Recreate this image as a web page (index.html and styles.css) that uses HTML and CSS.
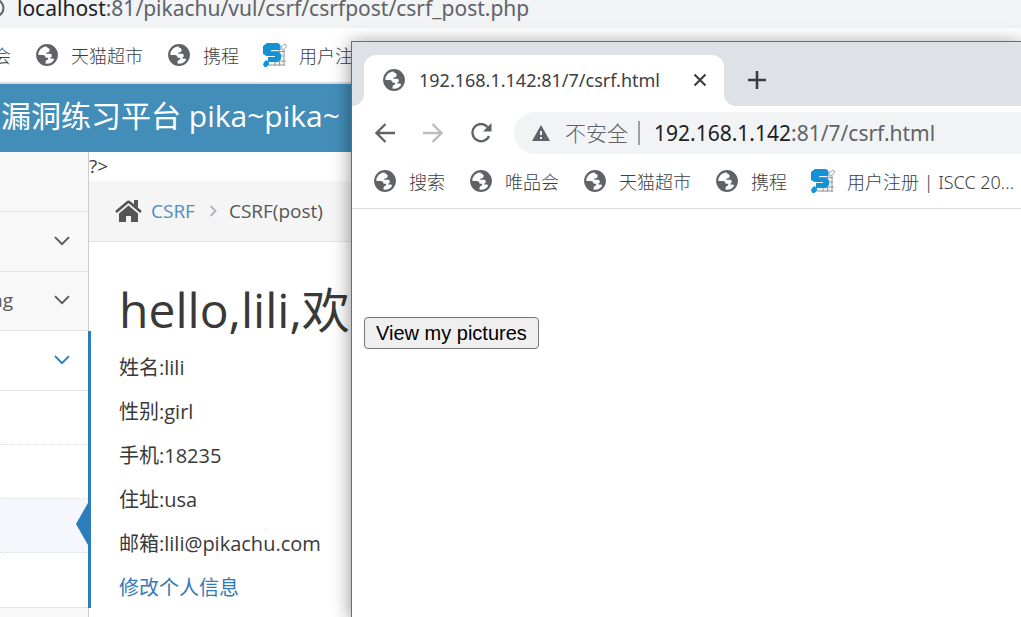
FILE: index.html
```html
<!DOCTYPE html>
<html lang="zh-CN">
<head>
<meta charset="utf-8">
<title>CSRF(post)</title>
<link rel="stylesheet" href="styles.css">
</head>
<body>
<svg class="defs" aria-hidden="true">
  <symbol id="globe" viewBox="0 0 22 22">
    <circle cx="11" cy="11" r="9.800" fill="#fff" stroke="#5f6368" stroke-width="2.200"/>
    <path d="M11 1C16.500 1 21 5.500 21 11c0 2-.6 3.900-1.700 5.300l-2-1.500c-.8-.5-1.800-.4-2.600.1l-.4-1.400c1-.3 1.600-1.100 1.500-2.100-.1-1-.9-1.600-1.900-1.600h-3.700V8.400c1.700.2 3-.4 3.300-1.700.3-1 .2-1.500-.5-2.200L10.500 3z" fill="#5f6368"/>
    <path d="M1 11l5.800.1c1.700 0 2.700 1.100 2.800 2.700h2.700c0 1.900-1.100 2.600-2.500 2.800l-.5 3.900C4.500 20 1 16 1 11z" fill="#5f6368"/>
  </symbol>
  <symbol id="iscc" viewBox="0 0 24 24">
    <path d="M6 5h16v18H6z" fill="#f1f1f0"/>
    <path d="M12 17v6M16.500 5v18M21 7v16M6 22h16M15 18h8M8 8.500h14M17 13h5" stroke="#9a9da0" stroke-width="1" fill="none"/>
    <path d="M18 4l4-3 1.500 1-1 3-3 2z" fill="#fff" stroke="#8a8d90" stroke-width=".8"/>
    <path d="M4 0h11l2.500 2v5H8v1.500h7l3 2.500v5l-3 3H5v-5h7v-1H3.500L0 11V3z" fill="#1492d4"/>
    <path d="M1 19l2.500-2L6 19.500v2L3.500 24H1.500L0 21.500z" fill="#1492d4"/>
  </symbol>
  <symbol id="chevron" viewBox="0 0 16 10">
    <path d="M1 1.200L8 8.200l7-7" fill="none" stroke="currentColor" stroke-width="1.900"/>
  </symbol>
</svg>

<div class="browser">
  <div class="address"><svg class="info" viewBox="0 0 20 20"><circle cx="10" cy="10" r="8.500" fill="none" stroke="#5f6368" stroke-width="2"/></svg><span><b>localhost</b>:81/pikachu/vul/csrf/csrfpost/csrf_post.php</span></div>
  <nav class="bookmarks main-bookmarks">
    <a href="#">唯品会</a>
    <a href="#"><svg class="fav"><use href="#globe"/></svg>天猫超市</a>
    <a href="#"><svg class="fav"><use href="#globe"/></svg>携程</a>
    <a href="#"><svg class="fav iscc"><use href="#iscc"/></svg>用户注</a>
  </nav>
  <header class="banner">漏洞练习平台 pika~pika~</header>
  <div class="page">
    <aside class="sidebar">
      <div class="item"></div>
      <div class="item"><svg class="chev"><use href="#chevron"/></svg></div>
      <div class="item short"><span>ng</span><svg class="chev"><use href="#chevron"/></svg></div>
      <div class="open">
        <div class="item active"><svg class="chev"><use href="#chevron"/></svg></div>
        <div class="sub"></div>
        <div class="sub"></div>
        <div class="sub current"></div>
        <div class="sub"></div>
      </div>
    </aside>
    <main class="content">
      <div class="stray">?&gt;</div>
      <nav class="crumbs">
        <svg class="home" viewBox="0 0 27 22"><path d="M13.500 5.500L23 13.500V22h-7v-6h-5v6H4v-8.500z" fill="#555"/><path d="M1 12L12.500 2.200q1-.8 2 0L26 12" fill="none" stroke="#555" stroke-width="2.600"/><path d="M19 0h4v8l-4-3.500z" fill="#555"/></svg>
        <a href="#">CSRF</a>
        <svg class="sep" viewBox="0 0 8 12"><path d="M1.500 1L6.500 6l-5 5" fill="none" stroke="#b2b6bf" stroke-width="2"/></svg>
        <span>CSRF(post)</span>
      </nav>
      <section class="profile">
        <h1>hello,lili,欢迎</h1>
        <p>姓名:lili</p>
        <p>性别:girl</p>
        <p>手机:18235</p>
        <p>住址:usa</p>
        <p>邮箱:lili@pikachu.com</p>
        <p><a href="#">修改个人信息</a></p>
      </section>
    </main>
  </div>
</div>

<div class="popup">
  <div class="tabs">
    <div class="tab">
      <svg class="fav"><use href="#globe"/></svg>
      <span class="tab-title">192.168.1.142:81/7/csrf.html</span>
      <button class="icon-btn" aria-label="关闭"><svg width="14" height="14" viewBox="0 0 14 14"><path d="M1.500 1.500l11 11M12.500 1.500l-11 11" stroke="#3c4043" stroke-width="2.200"/></svg></button>
    </div>
    <button class="icon-btn new-tab" aria-label="新标签页"><svg width="18" height="18" viewBox="0 0 18 18"><path d="M9 0v18M0 9h18" stroke="#3c4043" stroke-width="2.600"/></svg></button>
  </div>
  <div class="toolbar">
    <button class="icon-btn" aria-label="后退"><svg width="20" height="20" viewBox="0 0 20 20"><path d="M20 10H2M10.500 1L1.500 10l9 9" fill="none" stroke="#5f6368" stroke-width="2.300"/></svg></button>
    <button class="icon-btn" aria-label="前进"><svg width="20" height="20" viewBox="0 0 20 20"><path d="M0 10h18M9.500 1l9 9-9 9" fill="none" stroke="#babcbe" stroke-width="2.300"/></svg></button>
    <button class="icon-btn" aria-label="刷新"><svg width="21" height="20" viewBox="0 0 21 20"><path d="M16.800 4.200A8.600 8.600 0 1 0 18 13" fill="none" stroke="#5f6368" stroke-width="2.300"/><path d="M20.500 0v8.500H12z" fill="#5f6368"/></svg></button>
    <div class="omnibox">
      <svg width="18" height="16" viewBox="0 0 18 16"><path d="M9 0l9 16H0z" fill="#5f6368"/><path d="M9 6v4M9 12v2" stroke="#f1f3f4" stroke-width="2"/></svg>
      <span class="unsafe">不安全</span>
      <span class="url"><b>192.168.1.142</b>:81/7/csrf.html</span>
    </div>
  </div>
  <nav class="bookmarks">
    <a href="#"><svg class="fav"><use href="#globe"/></svg>搜索</a>
    <a href="#"><svg class="fav"><use href="#globe"/></svg>唯品会</a>
    <a href="#"><svg class="fav"><use href="#globe"/></svg>天猫超市</a>
    <a href="#"><svg class="fav"><use href="#globe"/></svg>携程</a>
    <a href="#"><svg class="fav iscc"><use href="#iscc"/></svg>用户注册 | ISCC 20...</a>
  </nav>
  <div class="document"><button class="view">View my pictures</button></div>
</div>
</body>
</html>
```
FILE: styles.css
```css
* { box-sizing: border-box; }

body {
  margin: 0;
  height: 100vh;
  overflow: hidden;
  position: relative;
  background: #fff;
  color: #393939;
  font-family: "Open Sans", "Noto Sans CJK SC", sans-serif;
  font-size: 19px;
}

a { color: inherit; text-decoration: none; }
b { font-weight: 400; color: #202124; }
svg { flex: none; display: block; }
.defs { position: absolute; width: 0; height: 0; }

/* Browser behind */
.browser { height: 100%; display: flex; flex-direction: column; overflow: hidden; }

.address {
  display: flex;
  align-items: center;
  gap: 12px;
  height: 28px;
  margin-left: -15px;
  padding-bottom: 12px;
  background: #f1f3f4;
  color: #5f6368;
  font-family: "Noto Sans", sans-serif;
  font-size: 21px;
  line-height: 24px;
}
.info { width: 20px; height: 20px; }

.bookmarks {
  display: flex;
  align-items: center;
  gap: 25px;
  height: 56px;
  padding: 0 22px;
  border-bottom: 1px solid #dadce0;
  color: #3c4043;
  font-family: "Noto Sans", "Noto Sans CJK SC", sans-serif;
  font-size: 18px;
  white-space: nowrap;
}
.bookmarks a { display: flex; align-items: center; gap: 13px; font-weight: 300; }
.fav { width: 22px; height: 22px; }
.iscc { width: 24px; height: 24px; margin: 0 -1px; }
.main-bookmarks { margin-left: -65px; border-bottom-width: 2px; }

.banner {
  flex: none;
  height: 68px;
  padding-left: 1px;
  background: #438eb9;
  color: #fff;
  font-size: 30px;
  line-height: 64px;
  white-space: nowrap;
}

.page { flex: 1; min-height: 0; display: flex; }

.sidebar {
  flex: none;
  width: 89px;
  background: #f8f8f8;
  border-right: 1px solid #ccc;
  color: #585858;
}
.item {
  display: flex;
  align-items: center;
  justify-content: flex-end;
  gap: 41px;
  height: 60px;
  padding: 0 18px 2px 0;
  border-bottom: 1px solid #e5e5e5;
  white-space: nowrap;
}
.short { height: 59px; }
.chev { width: 16px; height: 10px; }
.open { margin-right: -3px; border-right: 3px solid #2b7dbc; background: #fff; }
.active { color: #2b7dbc; }
.sub { height: 54px; border-bottom: 1px dotted #ddd; }
.sub:last-child { height: 55px; border-bottom: 1px solid #e5e5e5; }
.current { display: flex; align-items: center; justify-content: flex-end; padding-bottom: 4px; background: #f5f7fc; }
.current::after {
  content: "";
  border: solid transparent;
  border-width: 21px 12px 21px 0;
  border-right-color: #2b7dbc;
}

.content { flex: 1; min-width: 0; white-space: nowrap; }
.stray { height: 29px; line-height: 29px; }
.crumbs {
  display: flex;
  align-items: center;
  height: 61px;
  padding-left: 26px;
  background: #f5f5f5;
  border-bottom: 1px solid #e5e5e5;
  color: #555;
}
.crumbs a { margin: 0 14px 0 9px; color: #4c8fbd; }
.home { width: 27px; height: 22px; }
.sep { width: 8px; height: 12px; margin-right: 12px; }

.profile { padding: 37px 30px 0; }
.profile h1 { margin: 0 0 12px; font-size: 48px; font-weight: 400; line-height: 62px; }
.profile p { margin: 0 0 14px; font-size: 20px; line-height: 30px; }
.profile p a { color: #337ab7; }

/* Window in front */
.popup {
  position: absolute;
  top: 41px;
  right: 0;
  bottom: 0;
  left: 351px;
  display: flex;
  flex-direction: column;
  border: solid #6b6d70;
  border-width: 1px 0 0 1px;
  background: #fff;
  box-shadow: 0 3px 18px rgba(0, 0, 0, .45);
}
.tabs { display: flex; height: 64px; padding: 13px 0 0 12px; background: #dee1e6; }
.tab {
  position: relative;
  display: flex;
  align-items: center;
  width: 360px;
  padding: 0 17px 2px 19px;
  border-radius: 12px 12px 0 0;
  background: #fff;
}
.tab::before, .tab::after {
  content: "";
  position: absolute;
  bottom: 0;
  width: 12px;
  height: 12px;
}
.tab::before { right: 100%; background: radial-gradient(circle at 0 0, #dee1e6 12px, #fff 12px); }
.tab::after { left: 100%; background: radial-gradient(circle at 100% 0, #dee1e6 12px, #fff 12px); }
.tab-title {
  flex: 1;
  margin-left: 14px;
  color: #3c4043;
  font-family: "Noto Sans", sans-serif;
  font-size: 18px;
}
.icon-btn { display: flex; padding: 0; border: 0; background: none; }
.new-tab { align-self: center; margin-left: 24px; padding-bottom: 2px; }

.toolbar { display: flex; align-items: center; gap: 28px; height: 54px; padding-left: 23px; }
.omnibox {
  flex: 1;
  display: flex;
  align-items: center;
  height: 42px;
  margin-left: -6px;
  padding-left: 18px;
  border-radius: 21px 0 0 21px;
  background: #f1f3f4;
  color: #5f6368;
  font-family: "Noto Sans", "Noto Sans CJK SC", sans-serif;
  font-size: 21px;
  line-height: 24px;
  white-space: nowrap;
}
.unsafe { margin-left: 15px; padding-right: 10px; border-right: 2px solid #9aa0a6; font-weight: 300; }
.url { margin-left: 14px; }
.popup .bookmarks { height: 49px; padding-bottom: 6px; }

.document { padding: 108px 12px; }
.view {
  height: 32px;
  padding: 0 11px;
  border: 1px solid #767676;
  border-radius: 4px;
  background: #efefef;
  color: #000;
  font-family: "Liberation Sans", Arial, sans-serif;
  font-size: 20px;
}
```
